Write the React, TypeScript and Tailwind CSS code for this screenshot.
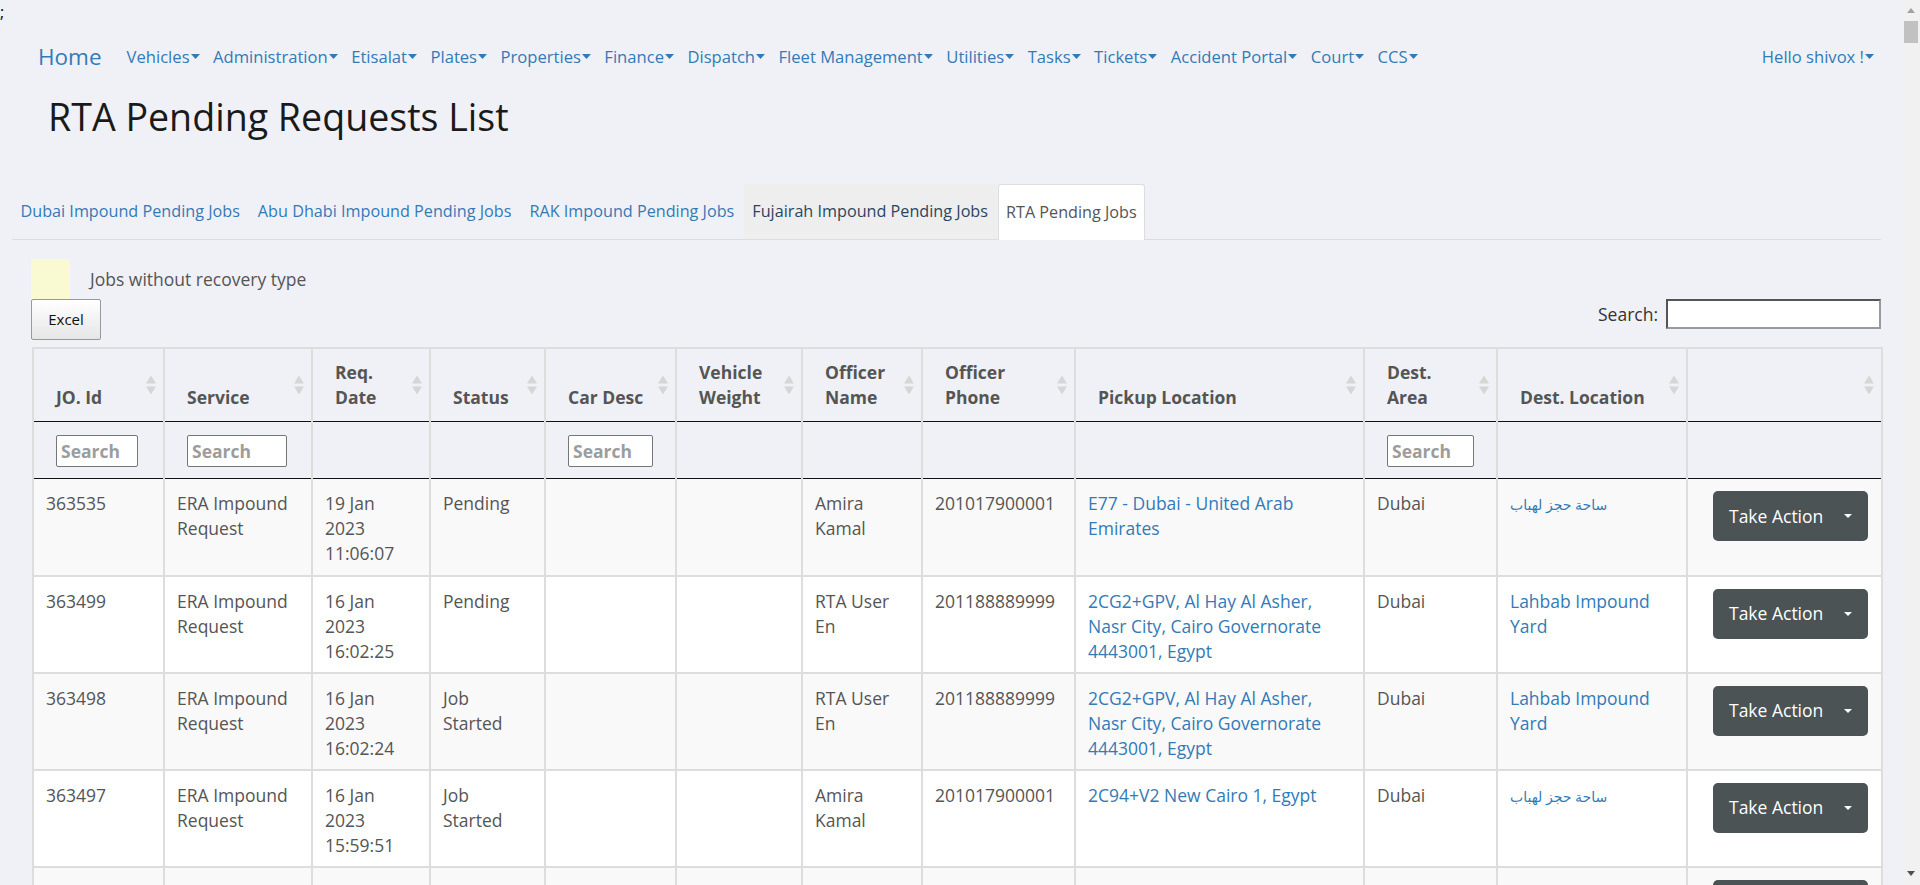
import React from "react";

const NAV_ITEMS = [
  "Vehicles",
  "Administration",
  "Etisalat",
  "Plates",
  "Properties",
  "Finance",
  "Dispatch",
  "Fleet Management",
  "Utilities",
  "Tasks",
  "Tickets",
  "Accident Portal",
  "Court",
  "CCS",
];

const COL_WIDTHS = [131, 148, 118, 115, 131, 126, 120, 153, 289, 133, 190, 195];

type Row = {
  id: string;
  service: string[];
  date: string[];
  status: string[];
  officer: string[];
  phone: string;
  pickup: string[];
  area: string;
  dest: string[];
  arabic?: boolean;
};

const AR = "ساحة حجز لهباب";

const ROWS: Row[] = [
  {
    id: "363535",
    service: ["ERA Impound", "Request"],
    date: ["19 Jan", "2023", "11:06:07"],
    status: ["Pending"],
    officer: ["Amira", "Kamal"],
    phone: "201017900001",
    pickup: ["E77 - Dubai - United Arab", "Emirates"],
    area: "Dubai",
    dest: [AR],
    arabic: true,
  },
  {
    id: "363499",
    service: ["ERA Impound", "Request"],
    date: ["16 Jan", "2023", "16:02:25"],
    status: ["Pending"],
    officer: ["RTA User", "En"],
    phone: "201188889999",
    pickup: ["2CG2+GPV, Al Hay Al Asher,", "Nasr City, Cairo Governorate", "4443001, Egypt"],
    area: "Dubai",
    dest: ["Lahbab Impound", "Yard"],
  },
  {
    id: "363498",
    service: ["ERA Impound", "Request"],
    date: ["16 Jan", "2023", "16:02:24"],
    status: ["Job", "Started"],
    officer: ["RTA User", "En"],
    phone: "201188889999",
    pickup: ["2CG2+GPV, Al Hay Al Asher,", "Nasr City, Cairo Governorate", "4443001, Egypt"],
    area: "Dubai",
    dest: ["Lahbab Impound", "Yard"],
  },
  {
    id: "363497",
    service: ["ERA Impound", "Request"],
    date: ["16 Jan", "2023", "15:59:51"],
    status: ["Job", "Started"],
    officer: ["Amira", "Kamal"],
    phone: "201017900001",
    pickup: ["2C94+V2 New Cairo 1, Egypt"],
    area: "Dubai",
    dest: [AR],
    arabic: true,
  },
];

function Caret({ color = "#337ab7" }: { color?: string }) {
  return (
    <svg width="9" height="5" viewBox="0 0 9 5" className="ml-[1px] shrink-0">
      <polygon points="0,0 9,0 4.5,5" fill={color} />
    </svg>
  );
}

function SortIcon() {
  return (
    <svg
      width="10"
      height="19"
      viewBox="0 0 10 19"
      className="absolute right-[7px] top-1/2 -translate-y-1/2"
    >
      <polygon points="0,8 5,0 10,8" fill="#d6d6d6" />
      <polygon points="0,11 10,11 5,19" fill="#d6d6d6" />
    </svg>
  );
}

function Lines({ lines }: { lines: string[] }) {
  return (
    <>
      {lines.map((l, i) => (
        <React.Fragment key={i}>
          {i > 0 && <br />}
          {l}
        </React.Fragment>
      ))}
    </>
  );
}

function HeadCell({ lines }: { lines: string[] }) {
  return (
    <th className="relative whitespace-nowrap border-x-2 border-t-2 border-b border-x-[#ddd] border-t-[#ddd] border-b-[#111] px-[22px] pt-[11px] pb-[11px] text-left align-bottom font-bold leading-[25px]">
      <Lines lines={lines} />
      <SortIcon />
    </th>
  );
}

function FilterCell({ w }: { w?: number }) {
  return (
    <th className="border-x-2 border-b border-x-[#ddd] border-b-[#111] pl-[22px] pt-[13px] pb-[11px] text-left align-top font-bold">
      {w ? (
        <input
          placeholder="Search"
          style={{ width: w }}
          className="block h-[32px] rounded-[2px] border border-[#767676] bg-white pl-[4px] text-[17.5px] font-bold placeholder:text-[#9c9c9c]"
        />
      ) : (
        <div className="h-[32px]" />
      )}
    </th>
  );
}

function Td({ children, link }: { children?: React.ReactNode; link?: boolean }) {
  return (
    <td
      className={`whitespace-nowrap border-x-2 border-b-2 border-[#ddd] px-[12px] pt-[12px] pb-[8px] align-top leading-[25px] ${
        link ? "text-[#337ab7]" : ""
      }`}
    >
      {children}
    </td>
  );
}

function ActionCell({ label = true }: { label?: boolean }) {
  return (
    <td className="border-x-2 border-b-2 border-[#ddd] pr-[13px] pt-[12px] align-top">
      <div className="flex justify-end">
        <button className="flex h-[50px] w-[155px] items-center justify-between rounded-[5px] bg-[#4b5355] pl-[16px] pr-[16px] text-[17.5px] text-white">
          {label ? "Take Action" : ""}
          <svg width="8" height="4" viewBox="0 0 8 4" className="ml-auto">
            <polygon points="0,0 8,0 4,4" fill="#fff" />
          </svg>
        </button>
      </div>
    </td>
  );
}

export default function App() {
  return (
    <div className="flex h-[885px] w-full overflow-hidden bg-[#f0f1f6] font-['Open_Sans','DejaVu_Sans',sans-serif] text-[17.5px] text-[#555]">
      <div className="min-w-0 flex-1 overflow-hidden">
        <div className="h-[24px] text-[16px] leading-[24px] text-black">;</div>

        <nav className="flex h-[66px] items-center pl-[38px] pr-[28px] pt-[1px] pb-[1px] text-[#337ab7]">
          <a className="mr-[25px] text-[22.5px] leading-[30px]">Home</a>
          <ul className="flex items-center gap-[13.5px] text-[16.6px]">
            {NAV_ITEMS.map((n) => (
              <li key={n} className="flex items-center">
                {n}
                <Caret />
              </li>
            ))}
          </ul>
          <div className="ml-auto flex items-center text-[16.6px]">
            Hello shivox !
            <Caret />
          </div>
        </nav>

        <h2 className="pl-[48px] pt-[7px] text-[37.6px] leading-[40px] text-[#1a1a1a]">
          RTA Pending Requests List
        </h2>

        <div className="mt-[47px] pl-[12px] pr-[21px]">
          <ul className="flex h-[56px] border-b border-[#ddd] text-[16.2px]">
            {["Dubai Impound Pending Jobs", "Abu Dhabi Impound Pending Jobs", "RAK Impound Pending Jobs"].map((t) => (
              <li key={t} className="mr-[1px] flex h-[55px] items-center border border-transparent px-[7.5px] text-[#337ab7]">
                {t}
              </li>
            ))}
            <li className="mr-[1px] flex h-[55px] items-center border border-transparent bg-[#eee] px-[7.5px] text-[#2b4560]">
              Fujairah Impound Pending Jobs
            </li>
            <li className="flex h-[56px] items-center rounded-t-[3px] border border-b-0 border-[#ddd] bg-white px-[7.5px] text-[#555]">
              RTA Pending Jobs
            </li>
          </ul>

          <div className="pl-[19px] pt-[19px]">
            <div className="flex items-center">
              <div className="h-[40px] w-[39px] bg-[#fafad2]" />
              <span className="ml-[20px] text-[17.5px] text-[#555]">Jobs without recovery type</span>
            </div>

            <div className="flex items-start justify-between">
              <button className="h-[41px] w-[70px] rounded-[2px] border border-[#999] bg-gradient-to-b from-white to-[#e6e6e6] text-[15px] text-[#111]">
                Excel
              </button>
              <label className="flex items-center gap-[8px] text-[17.5px] text-[#333]">
                Search:
                <input className="h-[30px] w-[215px] border-2 border-t-[#555] border-l-[#555] border-b-[#9a9a9a] border-r-[#9a9a9a] bg-white" />
              </label>
            </div>

            <table className="ml-px mt-[7px] w-[1849px] table-fixed border-collapse">
              <colgroup>
                {COL_WIDTHS.map((w, i) => (
                  <col key={i} style={{ width: w }} />
                ))}
              </colgroup>
              <thead>
                <tr>
                  <HeadCell lines={["JO. Id"]} />
                  <HeadCell lines={["Service"]} />
                  <HeadCell lines={["Req.", "Date"]} />
                  <HeadCell lines={["Status"]} />
                  <HeadCell lines={["Car Desc"]} />
                  <HeadCell lines={["Vehicle", "Weight"]} />
                  <HeadCell lines={["Officer", "Name"]} />
                  <HeadCell lines={["Officer", "Phone"]} />
                  <HeadCell lines={["Pickup Location"]} />
                  <HeadCell lines={["Dest.", "Area"]} />
                  <HeadCell lines={["Dest. Location"]} />
                  <HeadCell lines={[""]} />
                </tr>
                <tr>
                  <FilterCell w={82} />
                  <FilterCell w={100} />
                  <FilterCell />
                  <FilterCell />
                  <FilterCell w={85} />
                  <FilterCell />
                  <FilterCell />
                  <FilterCell />
                  <FilterCell />
                  <FilterCell w={87} />
                  <FilterCell />
                  <FilterCell />
                </tr>
              </thead>
              <tbody>
                {ROWS.map((r, i) => (
                  <tr key={r.id} className={`h-[97px] ${i % 2 === 0 ? "bg-[#f9f9f9]" : "bg-white"}`}>
                    <Td>{r.id}</Td>
                    <Td>
                      <Lines lines={r.service} />
                    </Td>
                    <Td>
                      <Lines lines={r.date} />
                    </Td>
                    <Td>
                      <Lines lines={r.status} />
                    </Td>
                    <Td />
                    <Td />
                    <Td>
                      <Lines lines={r.officer} />
                    </Td>
                    <Td>{r.phone}</Td>
                    <Td link>
                      <Lines lines={r.pickup} />
                    </Td>
                    <Td>{r.area}</Td>
                    <Td link>
                      {r.arabic ? (
                        <span className="text-[14px]">{r.dest[0]}</span>
                      ) : (
                        <Lines lines={r.dest} />
                      )}
                    </Td>
                    <ActionCell />
                  </tr>
                ))}
                <tr className="h-[97px] bg-[#f9f9f9]">
                  {Array.from({ length: 11 }).map((_, i) => (
                    <Td key={i} />
                  ))}
                  <ActionCell label={false} />
                </tr>
              </tbody>
            </table>
          </div>
        </div>
      </div>

      <div className="flex w-[18px] shrink-0 flex-col bg-[#f1f1f1]">
        <div className="flex h-[18px] justify-center pt-[8px]">
          <svg width="8" height="5" viewBox="0 0 8 5">
            <polygon points="0,5 4,0 8,5" fill="#a3a3a3" />
          </svg>
        </div>
        <div className="mx-[2px] mt-[3px] h-[22px] bg-[#c1c1c1]" />
        <div className="flex-1" />
        <div className="flex h-[18px] justify-center pt-[4px]">
          <svg width="8" height="5" viewBox="0 0 8 5">
            <polygon points="0,0 8,0 4,5" fill="#505050" />
          </svg>
        </div>
      </div>
    </div>
  );
}
